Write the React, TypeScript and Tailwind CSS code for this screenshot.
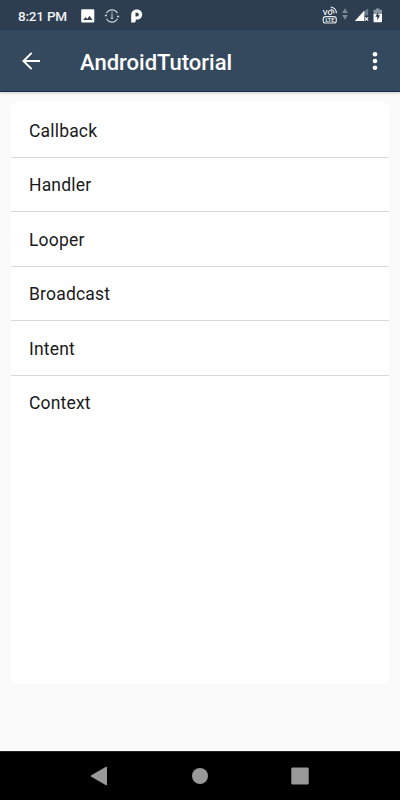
import React from 'react'

const topics: string[] = ['Callback', 'Handler', 'Looper', 'Broadcast', 'Intent', 'Context']

const StatusBar: React.FC = () => {
  return (
    <div className="h-[30px] flex-shrink-0 bg-[#2c3e50] flex items-center justify-between pl-[18px] pr-[17px] text-white">
      <div className="flex items-center">
        <span className="w-[63px] mt-px text-[13.5px] leading-[30px] font-medium tracking-[-0.2px] text-[#f0f2f4] whitespace-nowrap">8:21 PM</span>
        <svg width="14" height="14" viewBox="0 0 14 14" className="mt-px">
          <path
            fill="#fff"
            fillRule="evenodd"
            d="M1.5.3h10.500c.8 0 1.300.5 1.300 1.300v10.600c0 .8-.5 1.300-1.300 1.300H1.500C.7 13.500.2 13 .2 12.200V1.600C.2.800.7.300 1.500.300zM2.200 11h9.300L8.500 6.800l-2.300 3.100-1.600-2z"
          />
        </svg>
        <svg width="16" height="16" viewBox="0 0 16 16" className="ml-[9px] mt-px" fill="none" stroke="#cbd3da">
          <path d="M2.500 5.200a6.200 6.200 0 0 1 11 0M2.500 10.800a6.200 6.200 0 0 0 11 0" strokeWidth="1.100" />
          <path d="M8 5.500V11M6.800 9.800L8 11l1.200-1.200" strokeWidth="1" />
          <path d="M.8 7.500h2.200M13 8.500h2.200" strokeWidth="1.500" />
          <path d="M8 3.800v1" strokeWidth="1.200" />
        </svg>
        <svg width="12" height="14" viewBox="0 0 12 14" className="ml-[11px] mt-px">
          <path
            fill="#fff"
            fillRule="evenodd"
            d="M.2 5.700C.2 2.500 2.700.4 5.800.4c3.200 0 5.400 2 5.400 5.100 0 3-2.200 5.100-5.100 5.100H4.700v1.300c0 1-.8 1.700-1.700 1.700H.2zM4.500 3.800v3.800h1.200c1.400 0 2.100-.8 2.100-2s-.8-1.800-2-1.800z"
          />
        </svg>
      </div>
      <div className="flex items-center">
        <svg width="17" height="18" viewBox="0 0 17 18" fill="none" stroke="#e6eaed">
          <text x="0.800" y="9.400" fill="#fff" stroke="none" fontSize="7.500" fontWeight="500" textLength="9.800" lengthAdjust="spacingAndGlyphs">
            VO
          </text>
          <path d="M8.500 3.300a3.800 3.800 0 0 1 3.500 4.200M8.500 1a6.200 6.200 0 0 1 5.900 6.200" strokeWidth="1.100" />
          <rect x="1.200" y="10.600" width="13.100" height="6.400" rx="2.300" strokeWidth="1.100" />
          <text x="3.400" y="15.900" fill="#fff" stroke="none" fontSize="5.800" fontWeight="500" textLength="8.900" lengthAdjust="spacingAndGlyphs">
            LTE
          </text>
        </svg>
        <svg width="6" height="12" viewBox="0 0 6 12" className="ml-[3px] -mt-[3px]" fill="#7d8a96">
          <path d="M3 .3L5.800 5H.2zM3 11.700L.2 7h5.600z" />
        </svg>
        <svg width="16" height="14" viewBox="0 0 16 14" className="ml-[6px]">
          <path fill="#68788a" d="M9 4.300L14.200.3v7.300H9z" />
          <path fill="#fff" d="M.8 13L10.300 2.600V13z" />
          <path stroke="#fff" strokeWidth="1.200" d="M10.900 9.300l3.200 3.300M14.100 9.300l-3.200 3.300" />
        </svg>
        <svg width="10" height="15" viewBox="0 0 10 15" className="ml-[3px]">
          <path fill="#8a97a3" d="M3 .4h3.500v1.300H9V6.200H.5V1.700H3z" />
          <path fill="#fff" d="M.5 6H9v7c0 .8-.4 1.300-1.200 1.300H1.700C.9 14.300.5 13.800.5 13z" />
          <path fill="#2c3e50" d="M5.300 3.900v3.300h1.900L4.200 12.200V8.700H2.300z" />
        </svg>
      </div>
    </div>
  )
}

const AppBar: React.FC = () => {
  return (
    <header className="relative h-[62px] flex-shrink-0 bg-[#34495e] border-b border-[#10294c] shadow-[0_1px_3px_rgba(0,0,0,0.2)] flex items-center pl-[22px] pr-[21px]">
      <svg width="18" height="18" viewBox="0 0 18 18" fill="none" stroke="#fff" strokeWidth="2" className="mt-px">
        <path d="M18 9H1.800M9.700.9L1.500 9l8.200 8.100" />
      </svg>
      <h1 className="ml-10 mt-[4px] flex-1 text-[22px] leading-7 font-medium text-white">AndroidTutorial</h1>
      <svg width="6" height="20" viewBox="0 0 6 20" fill="#fff" className="mr-px mt-px">
        <circle cx="3" cy="3.300" r="2.300" />
        <circle cx="3" cy="10" r="2.300" />
        <circle cx="3" cy="16.700" r="2.300" />
      </svg>
    </header>
  )
}

const NavBar: React.FC = () => {
  return (
    <nav className="h-[49px] flex-shrink-0 bg-black border-t border-[#242424] flex items-center justify-center gap-[76px]">
      <svg width="24" height="24" viewBox="0 0 24 24" fill="#999">
        <path d="M3.300 11.200L18 2.800c.6-.3 1 0 1 .6v17.200c0 .6-.4.900-1 .6L3.300 12.800c-.6-.4-.6-1.200 0-1.600z" />
      </svg>
      <svg width="24" height="24" viewBox="0 0 24 24" fill="#999">
        <circle cx="12" cy="12" r="8" />
      </svg>
      <svg width="24" height="24" viewBox="0 0 24 24" fill="#999">
        <rect x="3.300" y="3.500" width="17.400" height="17" rx="1.200" />
      </svg>
    </nav>
  )
}

export default function App() {
  return (
    <div className="w-[400px] h-[800px] flex flex-col bg-[#fafafa] overflow-hidden font-['Roboto',sans-serif]">
      <StatusBar />
      <AppBar />
      <main className="flex-1 px-[11px] pt-[10px]">
        <ul className="h-[582px] rounded-md bg-white pt-[1.300px]">
          {topics.map((topic) => (
            <li
              key={topic}
              className="h-[54.500px] flex items-center pl-[18px] pt-[1.500px] border-b border-[#d9d9d9] last:border-b-0 last:pt-0 text-[17.500px] tracking-[0.180px] text-[#1a1a1a]"
            >
              {topic}
            </li>
          ))}
        </ul>
      </main>
      <NavBar />
    </div>
  )
}
